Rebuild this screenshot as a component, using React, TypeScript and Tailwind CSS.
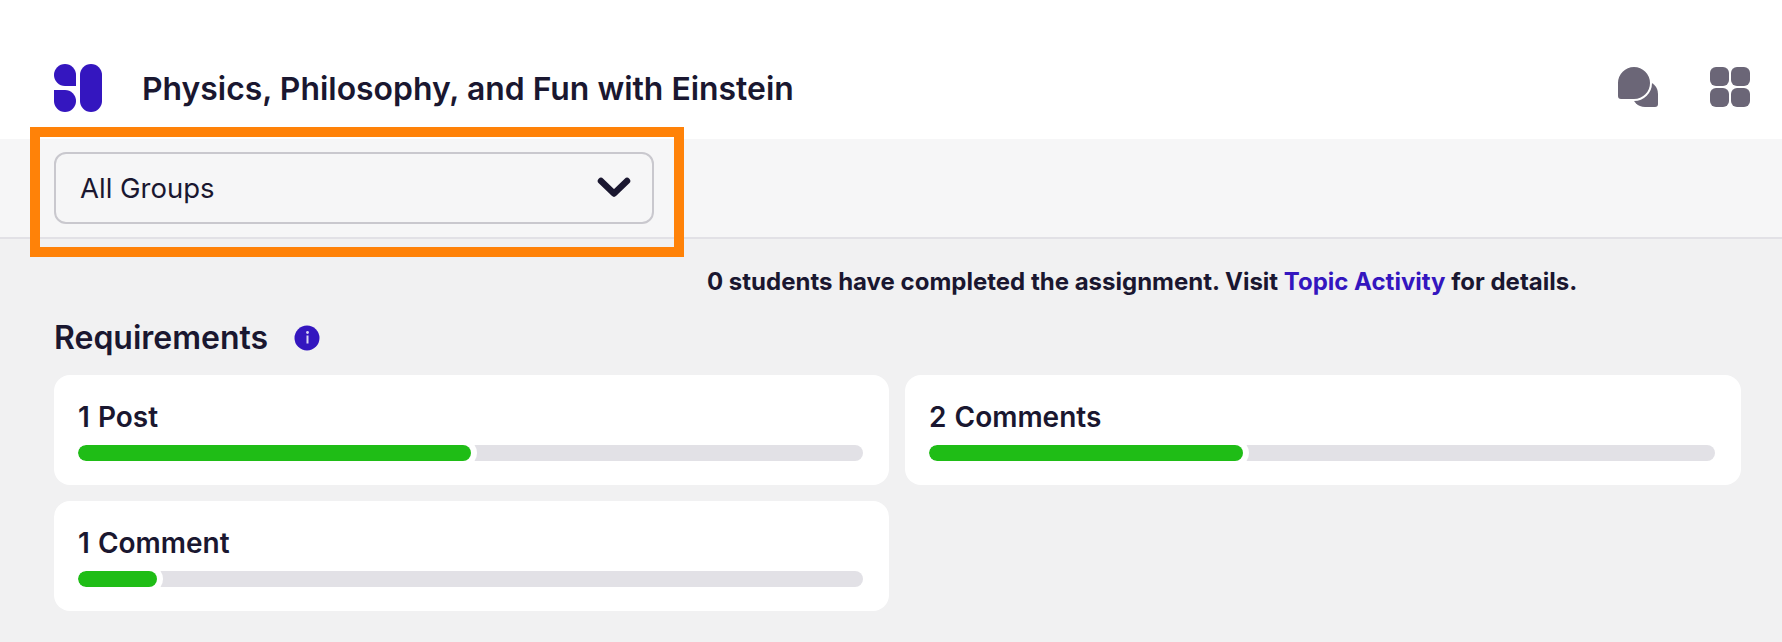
const requirements = [
  { label: "1 Post", percent: 50 },
  { label: "2 Comments", percent: 40 },
  { label: "1 Comment", percent: 10 },
];

function Logo() {
  return (
    <svg width="48" height="48" viewBox="0 0 48 48" className="shrink-0">
      <path d="M0 11a11 11 0 0 1 22 0v11H11A11 11 0 0 1 0 11z" fill="#3416bf" />
      <path d="M0 26h11a11 11 0 0 1 11 11 11 11 0 0 1-22 0z" fill="#3416bf" />
      <rect x="26" y="0" width="22" height="48" rx="11" fill="#3416bf" />
    </svg>
  );
}

function ChatIcon() {
  return (
    <svg width="40" height="40" viewBox="0 0 40 40">
      <path d="M27 14a13 13 0 0 1 13 13v10a3 3 0 0 1-3 3H27a13 13 0 0 1-13-13 13 13 0 0 1 13-13z" fill="#6b6677" />
      <path d="M16 -1a17 17 0 0 1 0 34H3a4 4 0 0 1-4-4V16A17 17 0 0 1 16-1z" fill="#6b6677" stroke="#fff" strokeWidth="2" />
    </svg>
  );
}

function GridIcon() {
  return (
    <div className="grid grid-cols-2 gap-[2px] w-10 h-10">
      <div className="bg-[#6b6677] rounded-[6px]" />
      <div className="bg-[#6b6677] rounded-[6px]" />
      <div className="bg-[#6b6677] rounded-[6px]" />
      <div className="bg-[#6b6677] rounded-[6px]" />
    </div>
  );
}

function Chevron() {
  return (
    <svg width="34" height="21" viewBox="0 0 34 21" fill="none" className="mb-[2px]">
      <path d="M4 4l13 12.5L30 4" stroke="#1a1730" strokeWidth="6.5" strokeLinecap="round" strokeLinejoin="round" />
    </svg>
  );
}

function InfoIcon() {
  return (
    <svg width="26" height="26" viewBox="0 0 26 26">
      <circle cx="13" cy="13" r="12.5" fill="#3416bf" />
      <circle cx="13.5" cy="7.5" r="1.4" fill="#d9d4f2" />
      <rect x="12.5" y="10.5" width="2" height="8" fill="#d9d4f2" />
    </svg>
  );
}

function RequirementCard({ label, percent }: { label: string; percent: number }) {
  return (
    <div className="bg-white rounded-[16px] h-[110px] pl-6 pr-[26px] pt-6">
      <div className="text-[28px] leading-[36px] font-semibold text-[#1a1730] [word-spacing:1px]">{label}</div>
      <div className="mt-[10px] h-4 rounded-full bg-[#e2e1e6] overflow-hidden">
        <div
          className="h-4 rounded-full bg-[#1fbd16] shadow-[0_0_0_6px_#ffffff]"
          style={{ width: `${percent}%` }}
        />
      </div>
    </div>
  );
}

export default function App() {
  return (
    <div className="w-[1782px] h-[642px] overflow-hidden bg-[#f1f1f2] font-['Inter',sans-serif] text-[#1a1730]">
      {/* Header */}
      <div className="h-[139px] bg-white flex items-start justify-between pl-[54px] pr-8 pt-[63px]">
        <div className="flex items-center gap-10">
          <Logo />
          <h1 className="text-[31.9px] leading-[48px] font-semibold pt-[2px]">Physics, Philosophy, and Fun with Einstein</h1>
        </div>
        <div className="flex items-center gap-[52px] pt-1">
          <ChatIcon />
          <GridIcon />
        </div>
      </div>

      {/* Group filter */}
      <div className="h-[100px] bg-[#f6f6f7] border-b-2 border-[#e2e1e6] pl-[54px] pt-[13px]">
        <div className="relative w-[600px] h-[72px] border-2 border-[#c9c8ce] rounded-[12px] flex items-center justify-between pl-6 pr-[21px]">
          <span className="text-[27.5px] pt-[2px]">All Groups</span>
          <Chevron />
          <div className="absolute left-[-26px] top-[-27px] w-[654px] h-[130px] border-[10px] border-[#ff8208]" />
        </div>
      </div>

      {/* Completion note */}
      <div className="pl-[707px] pt-[27px] text-[24px] leading-[32px] font-bold">
        0 students have completed the assignment. Visit <span className="text-[#3416bf]">Topic Activity</span> for details.
      </div>

      {/* Requirements */}
      <div className="pl-[54px]">
        <div className="flex items-center gap-[26px] mt-[20px] h-[40px]">
          <h2 className="text-[32px] leading-[40px] font-semibold">Requirements</h2>
          <InfoIcon />
        </div>
        <div className="grid grid-cols-[835px_836px] gap-4 mt-[17px]">
          {requirements.map((r) => (
            <RequirementCard key={r.label} label={r.label} percent={r.percent} />
          ))}
        </div>
      </div>
    </div>
  );
}
